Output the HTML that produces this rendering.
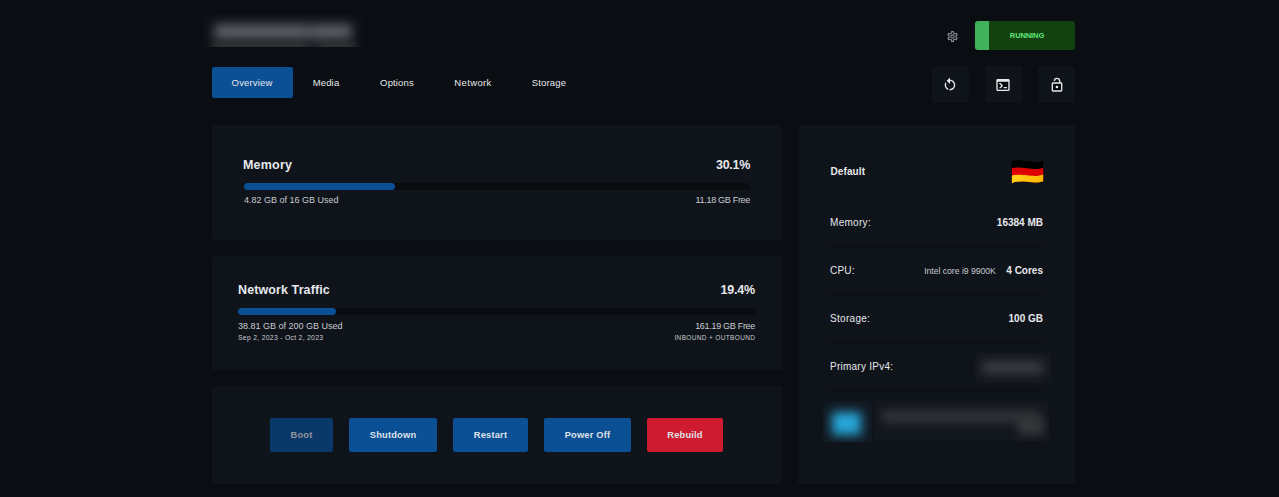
<!DOCTYPE html>
<html><head><meta charset="utf-8">
<style>
*{box-sizing:border-box;margin:0;padding:0}
html,body{width:1279px;height:497px;overflow:hidden;background:#0a0d12;font-family:"Liberation Sans",sans-serif;color:#e6e8eb}
.abs{position:absolute}
.card{position:absolute;background:#0f131a;border-radius:2px}
.tab{position:absolute;top:67px;height:31px;line-height:32px;font-size:9.500px;letter-spacing:0.150px;color:#e6e8eb;text-align:center;transform:translateX(-50%);white-space:nowrap}
.ibtn{position:absolute;top:66px;width:37px;height:37px;background:#0f131a;border-radius:3px}
.ibtn svg{position:absolute}
.t{position:absolute;white-space:nowrap;margin-top:1px}
.bar{position:absolute;height:7px;border-radius:4px;background:#090b0f}
.bar i{position:absolute;left:0;top:0;height:7px;border-radius:4px;background:#0b4f95}
.btn{position:absolute;top:418px;height:34px;line-height:35px;border-radius:2px;background:#0b4f95;color:#dfe2e6;font-weight:bold;font-size:9.300px;letter-spacing:0.200px;text-align:center}
.hr{position:absolute;left:830px;width:213px;height:1px;background:#090b0f}
.blur{position:absolute;filter:blur(4px)}
</style></head><body>

<!-- blurred title -->
<div class="abs" style="left:202px;top:14px;width:163px;height:33px;overflow:hidden;background:rgba(255,255,255,0.012)">
<div class="abs" style="left:0;top:0;width:163px;height:60px;filter:blur(5.500px)"><div class="abs" style="left:12px;top:10px;width:94px;height:16px;background:#5c5f64;border-radius:4px"></div><div class="abs" style="left:106px;top:10px;width:4px;height:16px;background:#4a4d52"></div><div class="abs" style="left:110px;top:10px;width:40px;height:16px;background:#5c5f64;border-radius:4px"></div></div>
<div class="abs" style="left:0;top:0;width:163px;height:60px;filter:blur(5px)"><div class="abs" style="left:10px;top:28px;width:97px;height:16px;background:#34373b"></div><div class="abs" style="left:115px;top:28px;width:38px;height:16px;background:#34373b"></div></div>
</div>

<!-- gear -->
<svg class="abs" style="left:946px;top:30px" width="13" height="13" viewBox="0 0 24 24" fill="#868d96"><path d="M12,8A4,4 0 0,1 16,12A4,4 0 0,1 12,16A4,4 0 0,1 8,12A4,4 0 0,1 12,8M12,10A2,2 0 0,0 10,12A2,2 0 0,0 12,14A2,2 0 0,0 14,12A2,2 0 0,0 12,10M10,22C9.750,22 9.540,21.820 9.500,21.580L9.130,18.930C8.500,18.680 7.960,18.340 7.440,17.940L4.950,18.950C4.730,19.030 4.460,18.950 4.340,18.730L2.340,15.270C2.210,15.050 2.270,14.780 2.460,14.630L4.570,12.970L4.500,12L4.570,11L2.460,9.370C2.270,9.220 2.210,8.950 2.340,8.730L4.340,5.270C4.460,5.050 4.730,4.960 4.950,5.050L7.440,6.050C7.960,5.660 8.500,5.320 9.130,5.070L9.500,2.420C9.540,2.180 9.750,2 10,2H14C14.250,2 14.460,2.180 14.500,2.420L14.870,5.070C15.500,5.320 16.040,5.660 16.560,6.050L19.050,5.050C19.270,4.960 19.540,5.050 19.660,5.270L21.660,8.730C21.790,8.950 21.730,9.220 21.540,9.370L19.430,11L19.500,12L19.430,13L21.540,14.630C21.730,14.780 21.790,15.050 21.660,15.270L19.660,18.730C19.540,18.950 19.270,19.040 19.050,18.950L16.560,17.950C16.040,18.340 15.500,18.680 14.870,18.930L14.500,21.580C14.460,21.820 14.250,22 14,22H10M11.250,4L10.880,6.610C9.680,6.860 8.620,7.500 7.850,8.390L5.440,7.350L4.690,8.650L6.800,10.200C6.400,11.370 6.400,12.640 6.800,13.800L4.680,15.360L5.430,16.660L7.860,15.620C8.630,16.500 9.680,17.140 10.870,17.380L11.240,20H12.760L13.130,17.390C14.320,17.140 15.370,16.500 16.140,15.620L18.570,16.660L19.320,15.360L17.200,13.810C17.600,12.640 17.600,11.370 17.200,10.200L19.310,8.650L18.560,7.350L16.150,8.390C15.380,7.500 14.320,6.860 13.120,6.620L12.750,4H11.250Z"/></svg>

<!-- status pill -->
<div class="abs" style="left:975px;top:21px;width:100px;height:29px;background:#12420f;border-radius:3px;overflow:hidden">
  <div class="abs" style="left:0;top:0;width:14px;height:29px;background:#42b15c"></div>
  <div class="t" style="left:14px;width:76px;top:-1px;line-height:29px;text-align:center;font-size:7.5px;font-weight:bold;color:#62ea7c;letter-spacing:-0.100px">RUNNING</div>
</div>

<!-- tabs -->
<div class="abs" style="left:212px;top:67px;width:81px;height:31px;background:#0b4f95;border-radius:2px"></div>
<div class="tab" style="left:252px">Overview</div>
<div class="tab" style="left:326px">Media</div>
<div class="tab" style="left:397px">Options</div>
<div class="tab" style="left:473px;letter-spacing:0.350px">Network</div>
<div class="tab" style="left:549px">Storage</div>

<!-- icon buttons -->
<div class="ibtn" style="left:932px"><svg style="left:10px;top:10.500px" width="16" height="16" viewBox="0 0 24 24" fill="#e6e8eb"><path d="M12,4C14.100,4.000 16.100,4.800 17.600,6.300C20.700,9.400 20.700,14.500 17.600,17.600C15.800,19.500 13.300,20.200 10.900,19.900L11.400,17.900C13.100,18.100 14.900,17.500 16.200,16.200C18.500,13.900 18.500,10.100 16.200,7.700C15.100,6.600 13.500,6.000 12,6V10.600L7,5.600L12,0.600V4M6.300,17.600C3.700,15.000 3.300,11.000 5.100,7.900L6.600,9.400C5.500,11.600 5.900,14.400 7.800,16.200C8.300,16.700 8.900,17.100 9.600,17.400L9,19.400C8,19.000 7.100,18.400 6.300,17.600Z"/></svg></div>
<div class="ibtn" style="left:985px"><svg style="left:10px;top:11px" width="16" height="16" viewBox="0 0 24 24"><rect x="4" y="7" width="16" height="12" fill="#06080a"/><path fill="#e6e8eb" d="M20,19V7H4V19H20M20,3A2,2 0 0,1 22,5V19A2,2 0 0,1 20,21H4A2,2 0 0,1 2,19V5C2,3.890 2.900,3 4,3H20M13,17V15H18V17H13M9.580,13L5.570,9H8.400L11.700,12.300C12.090,12.690 12.090,13.330 11.700,13.720L8.420,17H5.590L9.580,13Z"/></svg></div>
<div class="ibtn" style="left:1038px"><svg style="left:11px;top:10.500px" width="16" height="16" viewBox="0 0 24 24"><rect x="6" y="10" width="12" height="10" fill="#06080a"/><path fill="#e6e8eb" d="M18,20V10H6V20H18M18,8A2,2 0 0,1 20,10V20A2,2 0 0,1 18,22H6C4.890,22 4,21.100 4,20V10A2,2 0 0,1 6,8H15V6A3,3 0 0,0 12,3A3,3 0 0,0 9,6H7A5,5 0 0,1 12,1A5,5 0 0,1 17,6V8H18M12,17A2,2 0 0,1 10,15A2,2 0 0,1 12,13A2,2 0 0,1 14,15A2,2 0 0,1 12,17Z"/></svg></div>

<!-- cards -->
<div class="card" style="left:212px;top:125px;width:570px;height:115px"></div>
<div class="card" style="left:212px;top:256px;width:570px;height:114px"></div>
<div class="card" style="left:212px;top:386px;width:570px;height:98px"></div>
<div class="card" style="left:798px;top:125px;width:277px;height:359px"></div>

<!-- memory -->
<div class="t" style="left:243px;top:157px;font-size:12.500px;font-weight:bold;letter-spacing:0.200px">Memory</div>
<div class="t" style="right:529px;top:157px;font-size:12.500px;font-weight:bold;letter-spacing:-0.300px">30.1%</div>
<div class="bar" style="left:244px;top:183px;width:506px"><i style="width:151px"></i></div>
<div class="t" style="left:244px;top:194px;font-size:9px;color:#c9ccd1">4.82 GB of 16 GB Used</div>
<div class="t" style="right:529px;top:194px;font-size:9px;color:#c9ccd1;letter-spacing:-0.300px">11.18 GB Free</div>

<!-- network -->
<div class="t" style="left:238px;top:282px;font-size:12.500px;font-weight:bold;letter-spacing:0.100px">Network Traffic</div>
<div class="t" style="right:524px;top:282px;font-size:12.500px;font-weight:bold;letter-spacing:-0.200px">19.4%</div>
<div class="bar" style="left:238px;top:308px;width:518px"><i style="width:98px"></i></div>
<div class="t" style="left:238px;top:320px;font-size:9px;color:#c9ccd1">38.81 GB of 200 GB Used</div>
<div class="t" style="right:524px;top:320px;font-size:9px;letter-spacing:-0.300px;color:#c9ccd1">161.19 GB Free</div>
<div class="t" style="left:238px;top:333px;font-size:6.800px;letter-spacing:0.300px;color:#c9ccd1">Sep 2, 2023 - Oct 2, 2023</div>
<div class="t" style="right:524px;top:333px;font-size:6.500px;letter-spacing:0.350px;margin-right:-0.350px;color:#c9ccd1">INBOUND + OUTBOUND</div>

<!-- buttons -->
<div class="btn" style="left:270px;width:63px;background:#0a3868;color:#92959b">Boot</div>
<div class="btn" style="left:349px;width:88px">Shutdown</div>
<div class="btn" style="left:453px;width:75px">Restart</div>
<div class="btn" style="left:544px;width:87px">Power Off</div>
<div class="btn" style="left:647px;width:76px;background:#cf1b2f">Rebuild</div>

<!-- right panel -->
<div class="t" style="left:830px;top:165px;font-size:10px;font-weight:bold;letter-spacing:0.100px;margin-left:0.500px">Default</div>
<svg class="abs" style="left:1010px;top:159px" width="34" height="26" viewBox="-1 -1 34 26">
<defs><linearGradient id="yg" x1="0" x2="1"><stop offset="0" stop-color="#ffd21a"/><stop offset="1" stop-color="#fdb900"/></linearGradient>
<clipPath id="fc"><path d="M0.900,1.100C4,0.100 9,0.100 16,1.100S27,2.600 32.200,0.500V21.300C27,23.300 22,22.600 16,21.800S5,21.300 0.900,23.300Z"/></clipPath></defs>
<g clip-path="url(#fc)"><rect x="0" y="-1" width="34" height="27" fill="#000"/>
<path d="M0,8.200C4,7.200 9,7.200 16,8.200S27,9.700 33,7.600V30H0Z" fill="#dd0000"/>
<path d="M0,15.700C4,14.500 9,14.500 16,15.300S27,16.500 33,14.200V30H0Z" fill="url(#yg)"/></g></svg>

<div class="t" style="left:830px;top:216px;font-size:10px;letter-spacing:0.300px">Memory:</div>
<div class="t" style="right:236px;top:216px;font-size:10px;font-weight:bold">16384 MB</div>
<div class="hr" style="top:246px"></div>
<div class="t" style="left:830px;top:264px;font-size:10px;letter-spacing:0.200px">CPU:</div>
<div class="t" style="right:236px;top:264px;font-size:10px;font-weight:bold"><span style="font-size:8.600px;font-weight:normal;color:#c9ccd1;margin-right:10.500px;position:relative;top:0px">Intel core i9 9900K</span>4 Cores</div>
<div class="hr" style="top:294px"></div>
<div class="t" style="left:830px;top:312px;font-size:10px;letter-spacing:0.300px">Storage:</div>
<div class="t" style="right:236px;top:312px;font-size:10px;font-weight:bold">100 GB</div>
<div class="hr" style="top:342px"></div>
<div class="t" style="left:830px;top:360px;font-size:10px;letter-spacing:0.250px">Primary IPv4:</div>
<div class="abs" style="left:975px;top:353px;width:76px;height:30px;overflow:hidden;background:rgba(255,255,255,0.018)"><div class="abs" style="left:7px;top:9px;width:61px;height:11px;background:#404448;filter:blur(5.500px);border-radius:3px"></div></div>
<div class="hr" style="top:390px"></div>
<div class="abs" style="left:823px;top:401px;width:49px;height:41px;overflow:hidden;background:rgba(255,255,255,0.012)">
<div class="abs" style="left:4.500px;top:6.500px;width:38px;height:32px;background:rgba(40,170,220,0.220);filter:blur(7px)"></div>
<div class="abs" style="left:10px;top:12px;width:27px;height:21px;background:#28a5d7;filter:blur(5px)"></div>
</div>
<div class="abs" style="left:875px;top:401px;width:174px;height:40px;overflow:hidden;background:rgba(255,255,255,0.018)">
<div class="abs" style="left:7px;top:9px;width:158px;height:13px;background:#2f3336;filter:blur(5px)"></div>
<div class="abs" style="left:143px;top:18px;width:26px;height:15px;background:#363a3d;filter:blur(5px)"></div>
</div>

</body></html>
